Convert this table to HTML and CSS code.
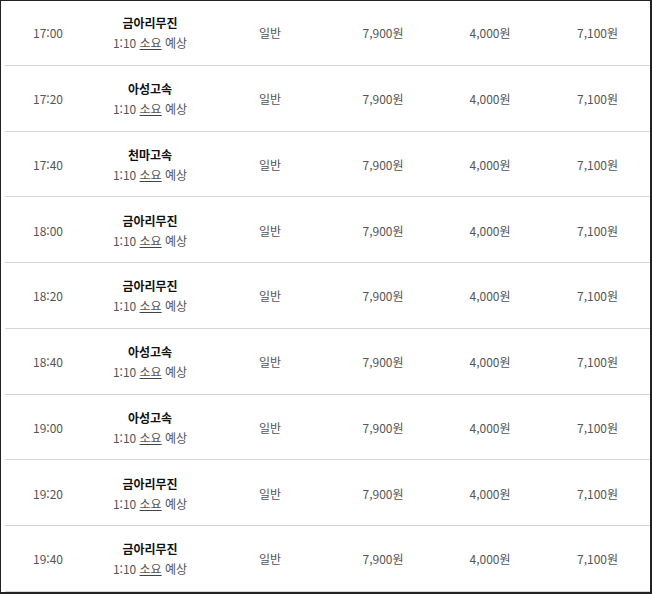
FILE: index.html
```html
<!DOCTYPE html>
<html lang="ko">
<head>
<meta charset="utf-8">
<link rel="stylesheet" href="styles.css">
</head>
<body>
<div class="frame">
  <div class="table">
    <div class="row"><div class="c time">17:00</div><div class="c bus"><b>금아리무진</b><span>1:10 <u>소요</u> 예상</span></div><div class="c">일반</div><div class="c">7,900원</div><div class="c">4,000원</div><div class="c">7,100원</div></div>
    <div class="row"><div class="c time">17:20</div><div class="c bus"><b>아성고속</b><span>1:10 <u>소요</u> 예상</span></div><div class="c">일반</div><div class="c">7,900원</div><div class="c">4,000원</div><div class="c">7,100원</div></div>
    <div class="row"><div class="c time">17:40</div><div class="c bus"><b>천마고속</b><span>1:10 <u>소요</u> 예상</span></div><div class="c">일반</div><div class="c">7,900원</div><div class="c">4,000원</div><div class="c">7,100원</div></div>
    <div class="row"><div class="c time">18:00</div><div class="c bus"><b>금아리무진</b><span>1:10 <u>소요</u> 예상</span></div><div class="c">일반</div><div class="c">7,900원</div><div class="c">4,000원</div><div class="c">7,100원</div></div>
    <div class="row"><div class="c time">18:20</div><div class="c bus"><b>금아리무진</b><span>1:10 <u>소요</u> 예상</span></div><div class="c">일반</div><div class="c">7,900원</div><div class="c">4,000원</div><div class="c">7,100원</div></div>
    <div class="row"><div class="c time">18:40</div><div class="c bus"><b>아성고속</b><span>1:10 <u>소요</u> 예상</span></div><div class="c">일반</div><div class="c">7,900원</div><div class="c">4,000원</div><div class="c">7,100원</div></div>
    <div class="row"><div class="c time">19:00</div><div class="c bus"><b>아성고속</b><span>1:10 <u>소요</u> 예상</span></div><div class="c">일반</div><div class="c">7,900원</div><div class="c">4,000원</div><div class="c">7,100원</div></div>
    <div class="row"><div class="c time">19:20</div><div class="c bus"><b>금아리무진</b><span>1:10 <u>소요</u> 예상</span></div><div class="c">일반</div><div class="c">7,900원</div><div class="c">4,000원</div><div class="c">7,100원</div></div>
    <div class="row"><div class="c time">19:40</div><div class="c bus"><b>금아리무진</b><span>1:10 <u>소요</u> 예상</span></div><div class="c">일반</div><div class="c">7,900원</div><div class="c">4,000원</div><div class="c">7,100원</div></div>
  </div>
</div>
</body>
</html>
```

FILE: styles.css
```css
html, body {
  margin: 0;
  padding: 0;
  background: #fff;
}
body {
  font-family: "Noto Sans CJK KR", "Noto Sans", sans-serif;
  font-size: 12px;
  color: #555;
}
.frame {
  width: 652px;
  height: 594px;
  box-sizing: border-box;
  border-style: solid;
  border-color: #222;
  border-width: 1px 2px 2px 1px;
  overflow: hidden;
  background: #fff;
}
.table {
  margin-top: -1px;
  margin-left: 4px;
}
.row {
  display: grid;
  grid-template-columns: 86px 118px 122px 104px 110px 1fr;
  height: 65.75px;
  box-sizing: border-box;
  padding-top: 2px;
  border-bottom: 1px solid #d6d6d6;
  align-items: center;
}
.c {
  text-align: center;
  line-height: 20px;
  white-space: nowrap;
}
.bus {
  display: flex;
  flex-direction: column;
  align-items: center;
}
.bus b {
  color: #111;
  font-weight: 700;
}
.bus span {
  color: #555;
}
.bus u {
  text-decoration: underline;
  text-underline-offset: 1px;
  text-decoration-color: #444;
}
```
